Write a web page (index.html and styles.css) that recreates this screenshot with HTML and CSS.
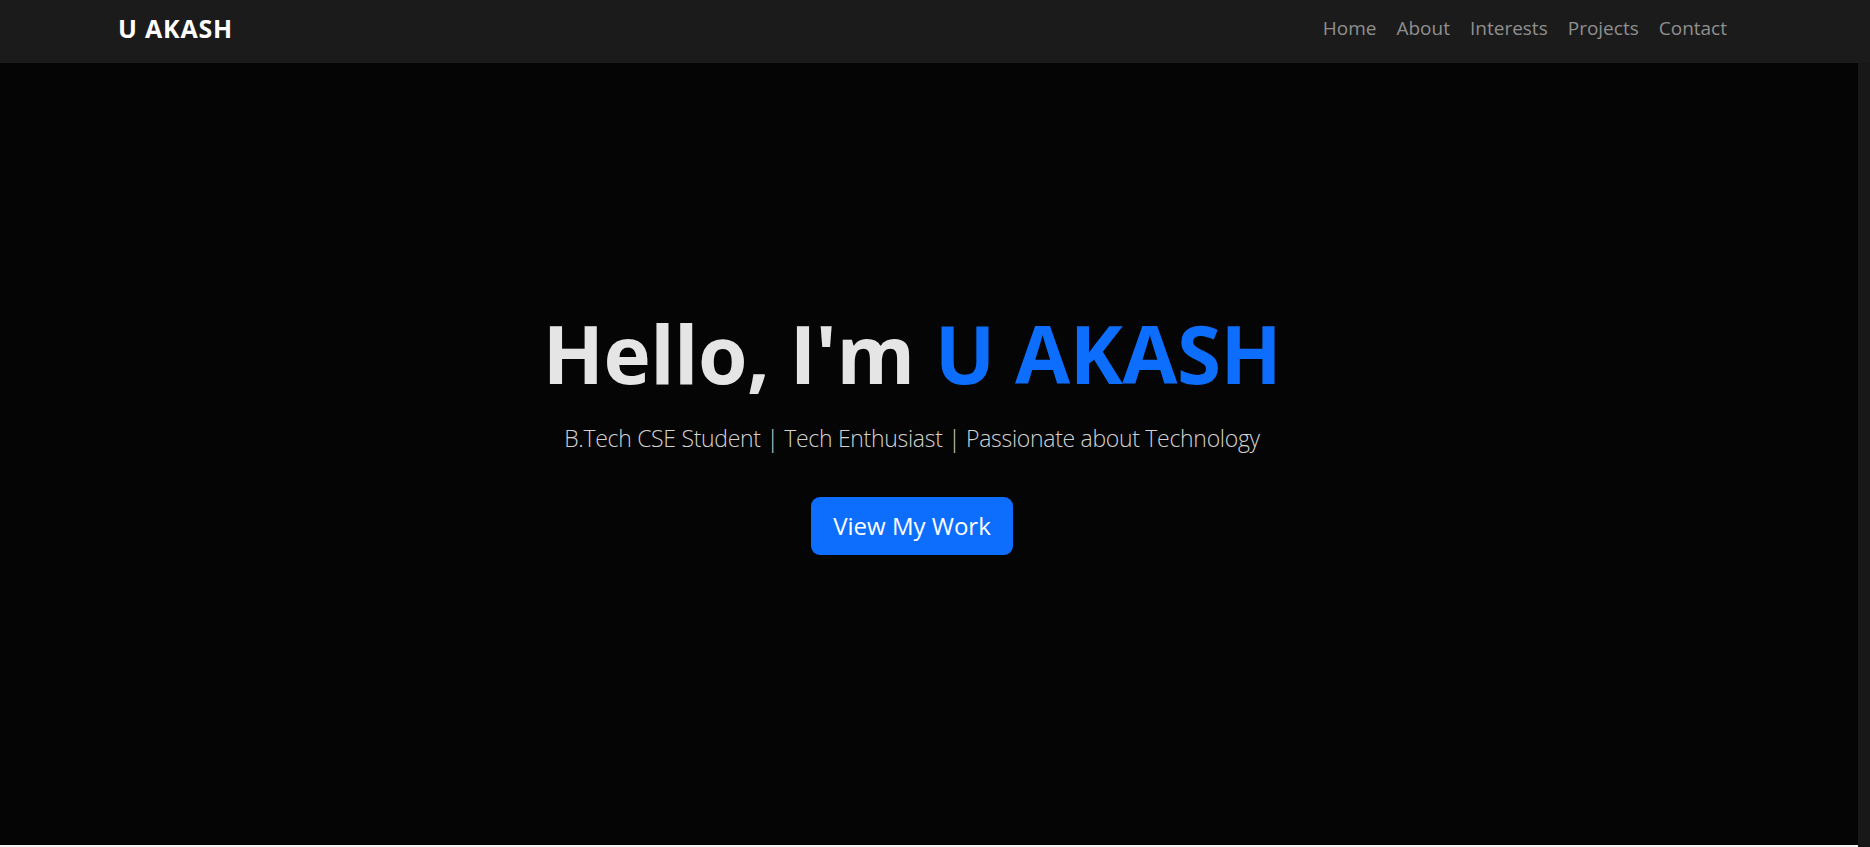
FILE: index.html
```html
<!DOCTYPE html>
<html lang="en">
<head>
    <meta charset="UTF-8">
    <meta name="viewport" content="width=device-width, initial-scale=1.0">
    <title>U AKASH | Portfolio</title>
    <link rel="stylesheet" href="styles.css">
</head>
<body>
    <header class="navbar">
        <a class="brand" href="#home">U AKASH</a>
        <ul class="nav-links">
            <li><a href="#home">Home</a></li>
            <li><a href="#about">About</a></li>
            <li><a href="#interests">Interests</a></li>
            <li><a href="#projects">Projects</a></li>
            <li><a href="#contact">Contact</a></li>
        </ul>
    </header>

    <main id="home" class="hero">
        <h1 class="hero-title">Hello, I'm <span class="accent">U AKASH</span></h1>
        <p class="hero-lead">B.Tech CSE Student | Tech Enthusiast | Passionate about Technology</p>
        <a class="btn-primary" href="#projects">View My Work</a>
    </main>

    <section id="about" class="about"></section>
</body>
</html>
```

FILE: styles.css
```css
/* Global styles */
body {
    margin: 0;
    padding: 0;
    background-color: #181818;
    font-family: "Open Sans", "Noto Sans", Arial, sans-serif;
}

a {
    text-decoration: none;
}

/* Navbar */
.navbar {
    height: 63px;
    background-color: #1b1b1b;
    display: flex;
    justify-content: space-between;
    align-items: center;
    padding: 0 133px 7px 118px;
    box-sizing: border-box;
}

.brand {
    color: #ffffff;
    font-size: 25px;
    font-weight: 700;
    letter-spacing: 0.8px;
}

.nav-links {
    list-style: none;
    display: flex;
    margin: 0;
    padding: 0;
}

.nav-links a {
    display: block;
    padding: 0 10px;
    font-size: 19px;
    color: #8f8f8f;
}

.nav-links a:hover {
    color: #d0d0d0;
}

/* Hero */
.hero {
    height: 782px;
    margin-right: 12px;
    background-color: #050505;
    display: flex;
    flex-direction: column;
    align-items: center;
    justify-content: center;
    padding: 0 34px 48px 0;
    box-sizing: border-box;
    text-align: center;
}

.hero-title {
    margin: 0 0 19px;
    font-size: 80px;
    font-weight: 700;
    line-height: 96px;
    letter-spacing: -0.5px;
    color: #e5e5e5;
}

.accent {
    color: #0d6efd;
}

.hero-lead {
    margin: 0 0 40px;
    font-size: 23px;
    font-weight: 300;
    line-height: 37px;
    letter-spacing: -0.3px;
    color: #d2d2d2;
}

.btn-primary {
    display: inline-block;
    height: 58px;
    line-height: 58px;
    padding: 0 22px;
    box-sizing: border-box;
    border-radius: 9px;
    background-color: #0d6efd;
    color: #ffffff;
    font-size: 24px;
}

.btn-primary:hover {
    background-color: #0b5ed7;
}

/* Next section, only its top edge shows */
.about {
    height: 300px;
    margin-right: 12px;
    background-color: #f4f4f4;
}
```
